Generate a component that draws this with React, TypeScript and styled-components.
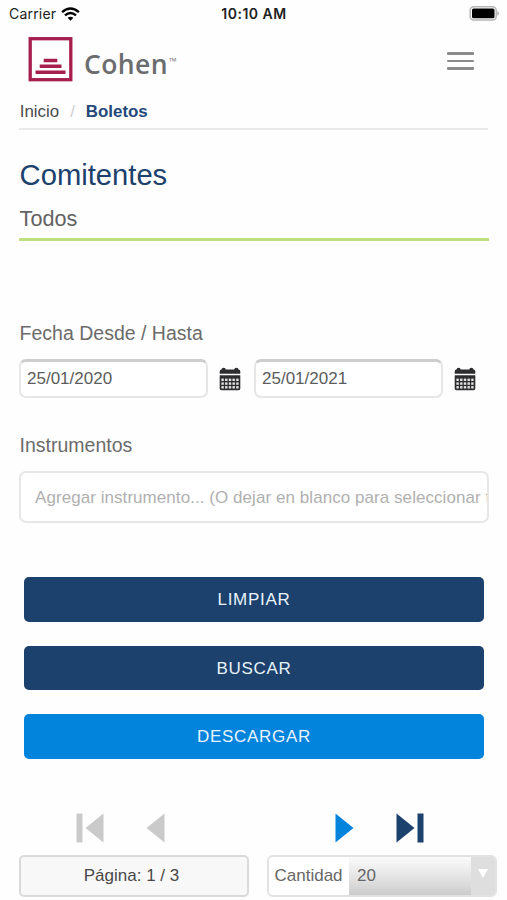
import React from "react";
import styled, { createGlobalStyle } from "styled-components";

const NAVY = "#1c416d";
const BLUE = "#0283dc";

const GlobalStyle = createGlobalStyle`
  * { box-sizing: border-box; }
  body {
    margin: 0;
    background: #fff;
    font-family: "Liberation Sans", Arial, sans-serif;
    font-size: 17px;
  }
`;

const Screen = styled.div`
  width: 507px;
  height: 900px;
  overflow: hidden;
  background: #fefefe;
`;

const StatusBar = styled.div`
  display: grid;
  grid-template-columns: 1fr auto 1fr;
  align-items: center;
  height: 27px;
  padding: 0 8px 0 9px;
  font: 400 14px/27px Inter, sans-serif;
  color: #222;
`;

const Carrier = styled.div`
  display: flex;
  align-items: center;
  gap: 5px;
  letter-spacing: 0.2px;
`;

const Clock = styled.div`
  font-weight: 600;
  letter-spacing: 0.5px;
`;

const BatteryIcon = styled.svg`
  justify-self: end;
`;

const Header = styled.header`
  display: flex;
  justify-content: space-between;
  align-items: flex-start;
  height: 68px;
  padding: 10px 33px 0 28px;
`;

const Logo = styled.div`
  display: flex;
  align-items: flex-start;
`;

const Wordmark = styled.span`
  margin: 9px 0 0 11px;
  font: 600 26.5px/36px "Open Sans", sans-serif;
  letter-spacing: 0.4px;
  color: #6a6c6e;
`;

const Trademark = styled.span`
  margin: 20px 0 0 1px;
  font: 400 10px/8px "Open Sans", sans-serif;
  color: #85878a;
`;

const MenuButton = styled.button`
  display: flex;
  flex-direction: column;
  gap: 5px;
  margin-top: 15px;
  padding: 0;
  border: 0;
  background: none;
`;

const MenuBar = styled.span`
  width: 27px;
  height: 2.5px;
  border-radius: 1px;
  background: #8b8b8b;
`;

const Content = styled.main`
  margin: 0 18px 0 19px;
`;

const Breadcrumb = styled.nav`
  display: flex;
  height: 35px;
  margin-right: 1px;
  padding: 7px 0 0 0.7px;
  line-height: 20px;
  font-size: 16.9px;
  color: #4a4a4a;
  border-bottom: 2px solid #e9e9e9;
`;

const Slash = styled.span`
  margin: 0 11px;
  color: #cfcfcf;
`;

const Current = styled.strong`
  color: #24487a;
`;

const Account = styled.section`
  height: 111px;
  padding: 27px 0 0 0.6px;
  border-bottom: 3px solid #bfe080;
`;

const Title = styled.h1`
  margin: 0;
  font-weight: 400;
  font-size: 29.2px;
  line-height: 36px;
  color: ${NAVY};
`;

const Subtitle = styled.div`
  margin-top: 12px;
  font-size: 21.6px;
  line-height: 28px;
  color: #636363;
`;

const Label = styled.label`
  display: block;
  padding-left: 0.6px;
  font-size: 19.5px;
  line-height: 24px;
  color: #6b6b6b;
`;

const Field = styled.section<{ $top: number }>`
  padding-top: ${(p) => p.$top}px;
`;

const DateRow = styled.div`
  display: flex;
  align-items: center;
  margin-top: 14px;
`;

const DateInput = styled.input`
  width: 189px;
  height: 39px;
  padding: 0 6px;
  border: 2px solid #e6e6e6;
  border-top: 3px solid #cdcdcd;
  border-radius: 7px;
  background: #fff;
  font: 400 17px "Liberation Sans", Arial, sans-serif;
  color: #5c5c5c;
  outline: 0;
`;

const CalendarSvg = styled.svg`
  flex: none;
  margin: 0 13px 0 11px;
`;

const InstrumentInput = styled.input`
  display: block;
  width: 470px;
  height: 52px;
  margin-top: 14px;
  padding: 1px 0 0 14px;
  border: 2px solid #e7e7e7;
  border-radius: 7px;
  background: #fff;
  font: 400 17px "Liberation Sans", Arial, sans-serif;
  letter-spacing: 0.06px;
  outline: 0;
  &::placeholder { color: #b0b0b0; opacity: 1; }
`;

const Actions = styled.div`
  display: flex;
  flex-direction: column;
  gap: 24px;
  margin: 54px 5px 0;
`;

const Action = styled.button<{ $color: string }>`
  height: 44.5px;
  padding: 2px 0 0;
  border: 0;
  border-radius: 5px;
  background: ${(p) => p.$color};
  color: #e8f3fb;
  font: 400 17px "Liberation Sans", Arial, sans-serif;
  letter-spacing: 0.7px;
`;

const Pager = styled.footer`
  display: grid;
  grid-template-columns: 230px 230px;
  column-gap: 18px;
  row-gap: 11px;
  margin: 54px 0 0 19px;
`;

const Arrows = styled.div<{ $left: number; $gap: number }>`
  display: flex;
  gap: ${(p) => p.$gap}px;
  height: 31px;
  padding-left: ${(p) => p.$left}px;
`;

const PageBox = styled.div`
  height: 42px;
  padding-right: 5px;
  border: 2px solid #dadada;
  border-radius: 5px;
  background: #f8f8f8;
  text-align: center;
  line-height: 38px;
  color: #484848;
`;

const QuantityBox = styled.div`
  display: flex;
  height: 42px;
  border: 2px solid #e2e2e2;
  border-radius: 6px;
  overflow: hidden;
  background: #fff;
  line-height: 38px;
  color: #666;
`;

const QuantityLabel = styled.span`
  width: 80px;
  padding-left: 5.5px;
`;

const QuantityValue = styled.span`
  flex: 1;
  padding-left: 8px;
  background: linear-gradient(#fafafa, #e8e8e8 45%, #cccccc);
`;

const QuantityArrow = styled.span`
  display: flex;
  justify-content: center;
  width: 24px;
  padding-top: 12px;
  background: #dedede;
`;

function Calendar() {
  const cols = [2.4, 6.1, 9.8, 13.5, 17.2];
  const rows = [11.6, 15.4, 19.1];
  return (
    <CalendarSvg width="22" height="24" viewBox="0 0 22 24">
      <path d="M.7 6.8V4.4Q.7 2.6 2.5 2.6Q2.5 .8 4.6 .8T6.7 2.6H15.3Q15.3 .8 17.4 .8T19.5 2.6Q21.3 2.6 21.3 4.4V6.8Z" fill="#2d2d30" />
      <path d="M.7 8.2H21.3V21.5Q21.3 23.2 19.6 23.2H2.4Q.7 23.2 .7 21.5Z" fill="#2d2d30" />
      {rows.map((y) => cols.map((x) => (
        <rect key={`${x}-${y}`} x={x} y={y} width="2.4" height="2.4" fill="#e4e4e4" />
      )))}
    </CalendarSvg>
  );
}

function Arrow({ back, bar, color }: { back?: boolean; bar?: boolean; color: string }) {
  const w = bar ? 28 : 19;
  return (
    <svg width={w} height="31" viewBox={`0 0 ${w} 31`} fill={color}>
      {back ? (
        <>
          {bar && <rect x="0.5" y="0.5" width="6" height="29" />}
          <path d={`M${w - 0.5} .5V29.5L${w - 18.5} 15Z`} />
        </>
      ) : (
        <>
          <path d="M.5 .5V29.5L18.5 15Z" />
          {bar && <rect x="21.5" y="0.5" width="6" height="29" />}
        </>
      )}
    </svg>
  );
}

export default function App() {
  return (
    <Screen>
      <GlobalStyle />
      <StatusBar>
        <Carrier>
          Carrier
          <svg width="19" height="14" viewBox="0 0 19 14" fill="none" stroke="#000" strokeWidth="2.4">
            <path d="M1.1 5.1Q9.5-2.2 17.9 5.1" />
            <path d="M4 8.4Q9.5 3.6 15 8.4" />
            <path d="M9.5 13.8L6.6 10.8Q9.5 8.6 12.4 10.8Z" fill="#000" stroke="none" />
          </svg>
        </Carrier>
        <Clock>10:10 AM</Clock>
        <BatteryIcon width="30" height="15" viewBox="0 0 30 15">
          <rect x="1.2" y="0.8" width="26" height="13.2" rx="3.5" fill="#fff" stroke="#b5b5b5" strokeWidth="1.5" />
          <rect x="3" y="2.5" width="22.5" height="9.8" rx="1.5" fill="#000" />
          <path d="M28.4 5.2Q30 5.7 30 7.4T28.4 9.6Z" fill="#aaa" />
        </BatteryIcon>
      </StatusBar>

      <Header>
        <Logo>
          <svg width="45" height="45" viewBox="0 0 45 45" fill="none" stroke="#a61e4d">
            <rect x="2.2" y="1.7" width="40.6" height="41" strokeWidth="3.3" />
            <path d="M15.7 23.5H29.3M11.7 29.3H33.5M7.5 35.3H37.5" strokeWidth="3.4" />
          </svg>
          <Wordmark>Cohen</Wordmark>
          <Trademark>™</Trademark>
        </Logo>
        <MenuButton aria-label="Menú">
          <MenuBar />
          <MenuBar />
          <MenuBar />
        </MenuButton>
      </Header>

      <Content>
        <Breadcrumb>
          <span>Inicio</span>
          <Slash>/</Slash>
          <Current>Boletos</Current>
        </Breadcrumb>

        <Account>
          <Title>Comitentes</Title>
          <Subtitle>Todos</Subtitle>
        </Account>

        <Field $top={80}>
          <Label>Fecha Desde / Hasta</Label>
          <DateRow>
            <DateInput defaultValue="25/01/2020" />
            <Calendar />
            <DateInput defaultValue="25/01/2021" />
            <Calendar />
          </DateRow>
        </Field>

        <Field $top={35}>
          <Label>Instrumentos</Label>
          <InstrumentInput placeholder="Agregar instrumento... (O dejar en blanco para seleccionar todos)" />
        </Field>

        <Actions>
          <Action $color={NAVY}>LIMPIAR</Action>
          <Action $color={NAVY}>BUSCAR</Action>
          <Action $color={BLUE}>DESCARGAR</Action>
        </Actions>
      </Content>

      <Pager>
        <Arrows $left={57} $gap={42}>
          <Arrow back bar color="#cacaca" />
          <Arrow back color="#cacaca" />
        </Arrows>
        <Arrows $left={68} $gap={42}>
          <Arrow color={BLUE} />
          <Arrow bar color={NAVY} />
        </Arrows>
        <PageBox>Página: 1 / 3</PageBox>
        <QuantityBox>
          <QuantityLabel>Cantidad</QuantityLabel>
          <QuantityValue>20</QuantityValue>
          <QuantityArrow>
            <svg width="10" height="9" viewBox="0 0 10 9"><path d="M0 0H10L5 9Z" fill="#fff" /></svg>
          </QuantityArrow>
        </QuantityBox>
      </Pager>
    </Screen>
  );
}
